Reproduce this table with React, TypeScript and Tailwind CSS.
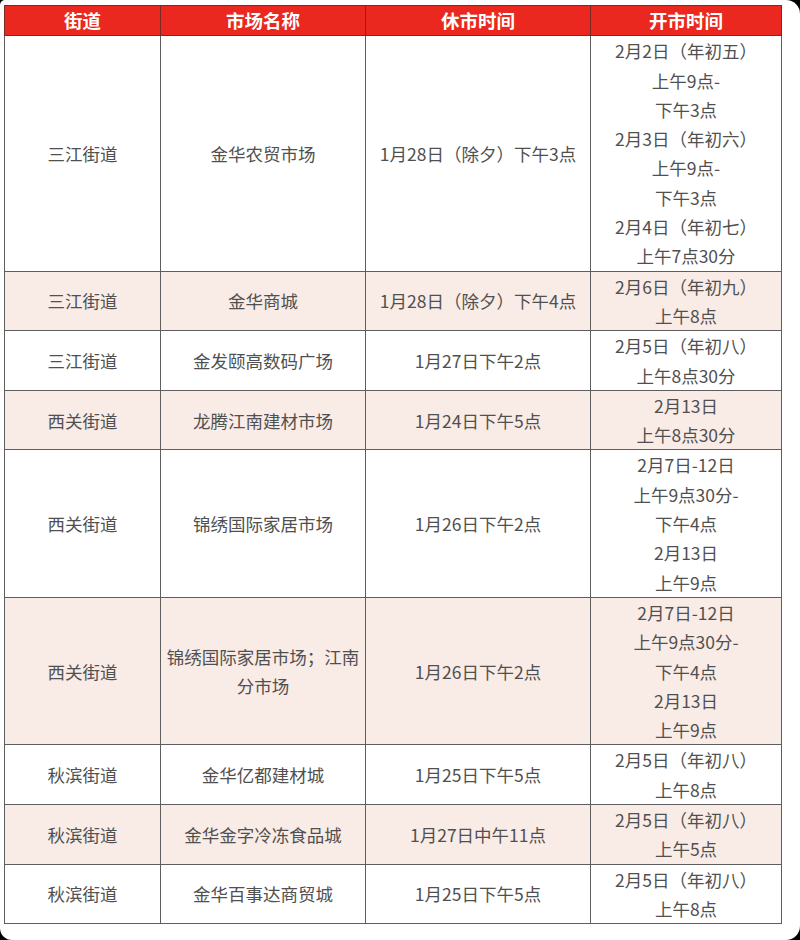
const rows = [
  {
    street: "三江街道",
    market: "金华农贸市场",
    close: "1月28日（除夕）下午3点",
    open: [
      "2月2日（年初五）",
      "上午9点-",
      "下午3点",
      "2月3日（年初六）",
      "上午9点-",
      "下午3点",
      "2月4日（年初七）",
      "上午7点30分",
    ],
  },
  {
    street: "三江街道",
    market: "金华商城",
    close: "1月28日（除夕）下午4点",
    open: ["2月6日（年初九）", "上午8点"],
  },
  {
    street: "三江街道",
    market: "金发颐高数码广场",
    close: "1月27日下午2点",
    open: ["2月5日（年初八）", "上午8点30分"],
  },
  {
    street: "西关街道",
    market: "龙腾江南建材市场",
    close: "1月24日下午5点",
    open: ["2月13日", "上午8点30分"],
  },
  {
    street: "西关街道",
    market: "锦绣国际家居市场",
    close: "1月26日下午2点",
    open: ["2月7日-12日", "上午9点30分-", "下午4点", "2月13日", "上午9点"],
  },
  {
    street: "西关街道",
    market: "锦绣国际家居市场；江南分市场",
    close: "1月26日下午2点",
    open: ["2月7日-12日", "上午9点30分-", "下午4点", "2月13日", "上午9点"],
  },
  {
    street: "秋滨街道",
    market: "金华亿都建材城",
    close: "1月25日下午5点",
    open: ["2月5日（年初八）", "上午8点"],
  },
  {
    street: "秋滨街道",
    market: "金华金字冷冻食品城",
    close: "1月27日中午11点",
    open: ["2月5日（年初八）", "上午5点"],
  },
  {
    street: "秋滨街道",
    market: "金华百事达商贸城",
    close: "1月25日下午5点",
    open: ["2月5日（年初八）", "上午8点"],
  },
];

const headers = ["街道", "市场名称", "休市时间", "开市时间"];

export default function App() {
  return (
    <div className="h-[940px] w-[800px] bg-black">
      <div
        className="h-full w-full rounded-tl-[5px] rounded-tr-[14px] rounded-br-[14px] rounded-bl-[12px] bg-white pl-[4px] pt-[5px]"
        style={{ fontFamily: '"Noto Sans CJK SC", "Noto Sans", sans-serif' }}
      >
        <table className="w-[777px] table-fixed border-collapse border border-[#5e5e5e] text-center text-[17.5px] leading-[29.3px] text-[#505050]">
          <colgroup>
            <col className="w-[156px]" />
            <col className="w-[205px]" />
            <col className="w-[225px]" />
            <col className="w-[191px]" />
          </colgroup>
          <thead>
            <tr className="bg-[#ea2820]">
              {headers.map((h) => (
                <th
                  key={h}
                  className="border border-[#7a2a26] p-0 text-[18.5px] font-bold text-white"
                >
                  {h}
                </th>
              ))}
            </tr>
          </thead>
          <tbody>
            {rows.map((r, i) => (
              <tr key={i} className={i % 2 === 1 ? "bg-[#f9ebe6]" : "bg-white"}>
                <td className="border border-[#5e5e5e] p-0">{r.street}</td>
                <td className="border border-[#5e5e5e] px-[4px] py-0">
                  {r.market}
                </td>
                <td className="border border-[#5e5e5e] p-0">{r.close}</td>
                <td className="border border-[#5e5e5e] p-0">
                  {r.open.map((line, j) => (
                    <div key={j}>{line}</div>
                  ))}
                </td>
              </tr>
            ))}
          </tbody>
        </table>
      </div>
    </div>
  );
}
